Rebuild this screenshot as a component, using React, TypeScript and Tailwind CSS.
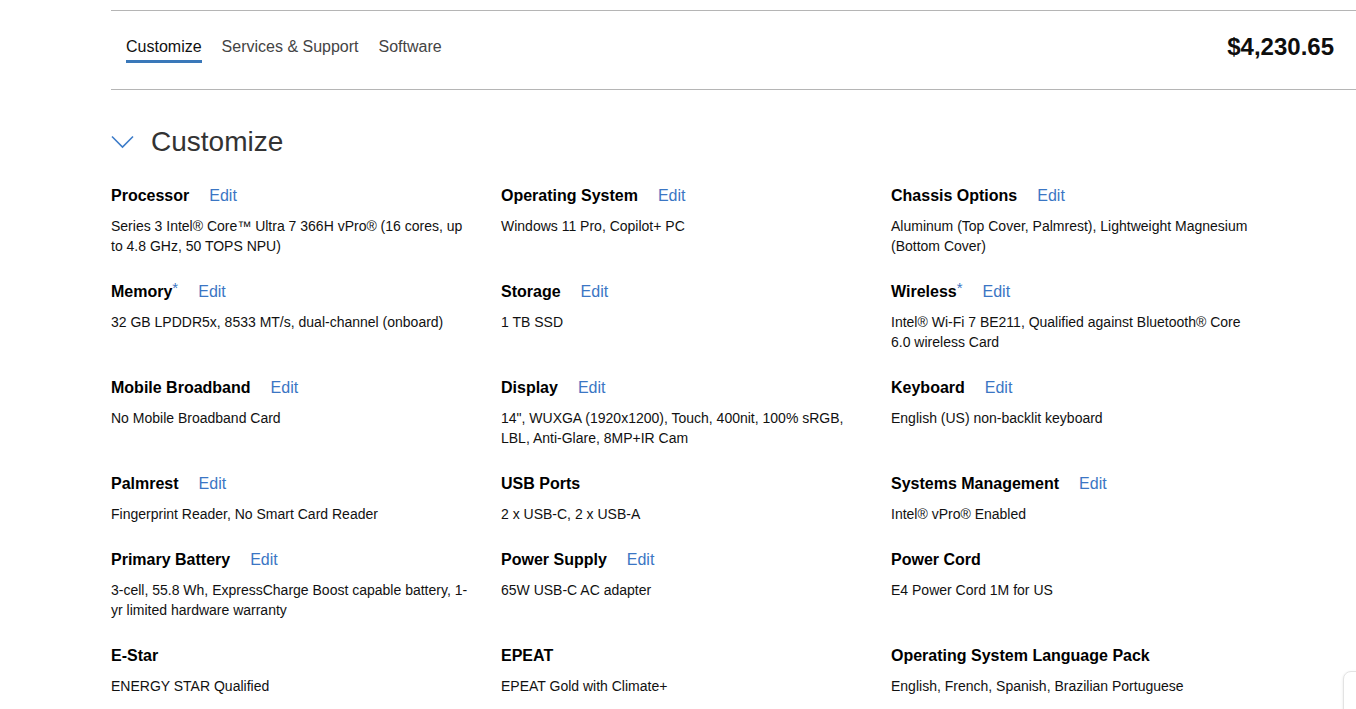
import React from "react";

type Spec = {
  title: string;
  value: string;
  edit?: boolean;
  star?: boolean;
};

const specs: Spec[] = [
  { title: "Processor", edit: true, value: "Series 3 Intel® Core™ Ultra 7 366H vPro® (16 cores, up to 4.8 GHz, 50 TOPS NPU)" },
  { title: "Operating System", edit: true, value: "Windows 11 Pro, Copilot+ PC" },
  { title: "Chassis Options", edit: true, value: "Aluminum (Top Cover, Palmrest), Lightweight Magnesium (Bottom Cover)" },
  { title: "Memory", edit: true, star: true, value: "32 GB LPDDR5x, 8533 MT/s, dual-channel (onboard)" },
  { title: "Storage", edit: true, value: "1 TB SSD" },
  { title: "Wireless", edit: true, star: true, value: "Intel® Wi-Fi 7 BE211, Qualified against Bluetooth® Core 6.0 wireless Card" },
  { title: "Mobile Broadband", edit: true, value: "No Mobile Broadband Card" },
  { title: "Display", edit: true, value: "14\", WUXGA (1920x1200), Touch, 400nit, 100% sRGB, LBL, Anti-Glare, 8MP+IR Cam" },
  { title: "Keyboard", edit: true, value: "English (US) non-backlit keyboard" },
  { title: "Palmrest", edit: true, value: "Fingerprint Reader, No Smart Card Reader" },
  { title: "USB Ports", value: "2 x USB-C, 2 x USB-A" },
  { title: "Systems Management", edit: true, value: "Intel® vPro® Enabled" },
  { title: "Primary Battery", edit: true, value: "3-cell, 55.8 Wh, ExpressCharge Boost capable battery, 1-yr limited hardware warranty" },
  { title: "Power Supply", edit: true, value: "65W USB-C AC adapter" },
  { title: "Power Cord", value: "E4 Power Cord 1M for US" },
  { title: "E-Star", value: "ENERGY STAR Qualified" },
  { title: "EPEAT", value: "EPEAT Gold with Climate+" },
  { title: "Operating System Language Pack", value: "English, French, Spanish, Brazilian Portuguese" },
];

export default function App() {
  return (
    <div className="min-h-screen bg-white font-['Liberation_Sans',Arial,sans-serif] text-black overflow-hidden">
      <div className="ml-[111px] mt-[10px]">
        {/* tab bar */}
        <div className="h-[80px] border-t border-b border-[#b5b5b5] flex justify-between">
          <div className="flex gap-[20px] pl-[15px] pt-[24px]">
            <div className="flex flex-col">
              <span className="text-[16px] leading-[24px] text-[#111]">Customize</span>
              <span className="mt-[1px] h-[3px] bg-[#3a78b9]" />
            </div>
            <span className="text-[16px] leading-[24px] text-[#444]">Services &amp; Support</span>
            <span className="text-[16px] leading-[24px] text-[#444]">Software</span>
          </div>
          <div className="pr-[22px] pt-[22px] text-[24px] leading-[28px] font-bold text-[#0e0e0e]">
            $4,230.65
          </div>
        </div>

        {/* section title */}
        <div className="flex items-center gap-[17px] mt-[36px] h-[32px]">
          <svg width="23" height="14" viewBox="0 0 23 14">
            <path d="M1 1.5 L11.5 12 L22 1.5" fill="none" stroke="#3d7cc9" strokeWidth="1.6" />
          </svg>
          <h2 className="text-[28px] leading-[32px] text-[#333]">Customize</h2>
        </div>

        {/* specs grid */}
        <div className="grid grid-cols-[390px_390px_390px] gap-y-[24px] mt-[26px]">
          {specs.map((s) => (
            <div key={s.title} className="pr-[30px]">
              <div className="flex items-center h-[24px]">
                <span className="text-[16px] font-bold leading-[24px]">{s.title}</span>
                {s.star && <span className="text-[15px] text-[#3b76c4] self-start leading-[16px]">*</span>}
                {s.edit && <span className="ml-[20px] text-[16px] leading-[24px] text-[#3b76c4]">Edit</span>}
              </div>
              <p className="mt-[8px] text-[14px] leading-[20px] text-[#111]">{s.value}</p>
            </div>
          ))}
        </div>
      </div>

      <div className="fixed left-[1343px] top-[671px] w-[48px] h-[48px] rounded-[8px] border border-[#e3e3e3] bg-white shadow-sm" />
    </div>
  );
}
